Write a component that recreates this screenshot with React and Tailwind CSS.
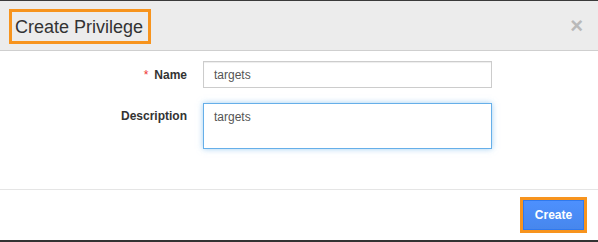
export default function App() {
  return (
    <div className="w-[598px] h-[242px] bg-white flex flex-col overflow-hidden" style={{ fontFamily: '"Liberation Sans", Arial, sans-serif' }}>
      <div className="h-[1px] bg-[#3a3a3a] shrink-0" />
      <div className="h-[50px] shrink-0 bg-[#ececec] border-b border-[#cfcfcf] flex items-start justify-between pl-[9px] pr-[15px] pt-[8px]">
        <div className="border-[3px] border-[#f7941e] h-[35px] w-[142px] pl-[3px] flex items-center">
          <span className="text-[18px] leading-none text-[#333]">Create Privilege</span>
        </div>
        <span className="text-[22px] font-bold leading-none text-[#b9b9b9] mt-[6px]">×</span>
      </div>
      <div className="flex-1 flex flex-col gap-[15px] pt-[10px] border-b border-[#e5e5e5]">
        <div className="flex items-center">
          <label className="w-[187px] text-right text-[12px] font-bold text-[#333]">
            <span className="text-[#e33] font-normal mr-[6px]">*</span>Name
          </label>
          <div className="ml-[16px] w-[289px] h-[27px] border border-[#ccc] shadow-[inset_0_1px_1px_rgba(0,0,0,0.075)] flex items-center px-[10px] text-[12px] text-[#555]">targets</div>
        </div>
        <div className="flex items-start">
          <label className="w-[187px] text-right text-[12px] font-bold text-[#333] pt-[4px]">Description</label>
          <div className="ml-[16px] w-[289px] h-[46px] border border-[#66afe9] shadow-[0_0_6px_rgba(102,175,233,0.6)] px-[10px] pt-[4px] text-[12px] text-[#555]">targets</div>
        </div>
      </div>
      <div className="h-[50px] shrink-0 flex items-start justify-end pr-[11px] pt-[7px]">
        <div className="border-[3px] border-[#f7941e]">
          <button className="w-[61px] h-[30px] bg-gradient-to-b from-[#4d90fe] to-[#4787ed] border border-[#3079ed] text-white text-[12px] font-bold">Create</button>
        </div>
      </div>
      <div className="h-[2px] bg-[#333] shrink-0" />
    </div>
  );
}
